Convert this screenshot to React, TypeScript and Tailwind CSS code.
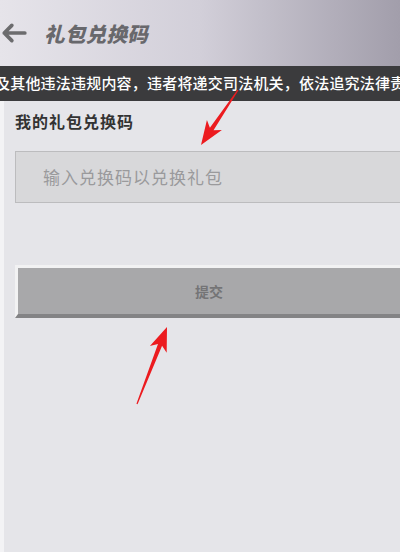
import React from "react";

type Pt = [number, number];

// red annotation arrow: tapered shaft + barbed head
function arrowPoints(tail: Pt, tip: Pt, headLen: number, headW: number, shaftW: number) {
  const dx = tip[0] - tail[0];
  const dy = tip[1] - tail[1];
  const len = Math.hypot(dx, dy);
  const ux = dx / len;
  const uy = dy / len;
  const px = -uy;
  const py = ux;
  const bx = tip[0] - ux * headLen;
  const by = tip[1] - uy * headLen;
  const nx = tip[0] - ux * headLen * 0.8;
  const ny = tip[1] - uy * headLen * 0.8;
  const pts: Pt[] = [
    [tail[0] + px * 0.6, tail[1] + py * 0.6],
    [nx + px * shaftW, ny + py * shaftW],
    [bx + px * headW, by + py * headW],
    tip,
    [bx - px * headW, by - py * headW],
    [nx - px * shaftW, ny - py * shaftW],
    [tail[0] - px * 0.6, tail[1] - py * 0.6],
  ];
  return pts.map((p) => p.join(",")).join(" ");
}

export default function App() {
  return (
    <div
      className="relative w-[400px] h-[552px] overflow-hidden bg-[#e5e5e9]"
      style={{ fontFamily: '"Noto Sans CJK SC", "Noto Sans", sans-serif' }}
    >
      {/* header */}
      <header className="h-[66px] flex items-center bg-gradient-to-r from-[#e6e4ea] via-[#d2cfd9] to-[#a29eab]">
        <svg viewBox="0 0 24 24" className="ml-[1px] h-[26px] w-[26px] text-[#6c6c6e]" fill="none" stroke="currentColor" strokeWidth="3.4" strokeLinecap="round" strokeLinejoin="round">
          <path d="M22 12H3M10 5l-7 7 7 7" />
        </svg>
        <h1 className="ml-[17px] text-[20.5px] font-black italic text-[#68686c] tracking-[0.3px]">礼包兑换码</h1>
      </header>

      {/* notice strip */}
      <div className="h-[35px] flex items-center overflow-hidden bg-[#3b3b3d]">
        <p className="-ml-[5px] whitespace-nowrap text-[15px] font-medium text-white tracking-[0.2px]">
          及其他违法违规内容，违者将递交司法机关，依法追究法律责任
        </p>
      </div>

      {/* form */}
      <main className="h-[451px] border-l-4 border-[#f3f3f5] pl-[11px] pt-[9px]">
        <div className="text-[16px] font-bold text-[#333] tracking-[1px] leading-[22px]">我的礼包兑换码</div>

        <div className="mt-[19px] h-[52px] flex items-center border border-r-0 border-[#bcbcbe] bg-[#d8d8da] pl-[27px]">
          <span className="text-[17px] text-[#9a9a9c] tracking-[1px]">输入兑换码以兑换礼包</span>
        </div>

        <button className="mt-[62px] h-[53px] w-full flex items-center justify-center border-t-[3px] border-l-[3px] border-[#f2f2f3] border-b-[4px] border-b-[#838385] bg-[#a8a8aa]">
          <span className="text-[14px] font-bold text-[#747476]">提交</span>
        </button>
      </main>

      {/* annotation arrows */}
      <svg className="absolute left-0 top-0 pointer-events-none" width="400" height="552">
        <polygon points={arrowPoints([238, 90], [201, 145], 24, 9, 2.2)} fill="#ec1b1f" />
        <polygon points={arrowPoints([137, 404], [167, 327], 24, 9, 2.2)} fill="#ec1b1f" />
      </svg>
    </div>
  );
}
